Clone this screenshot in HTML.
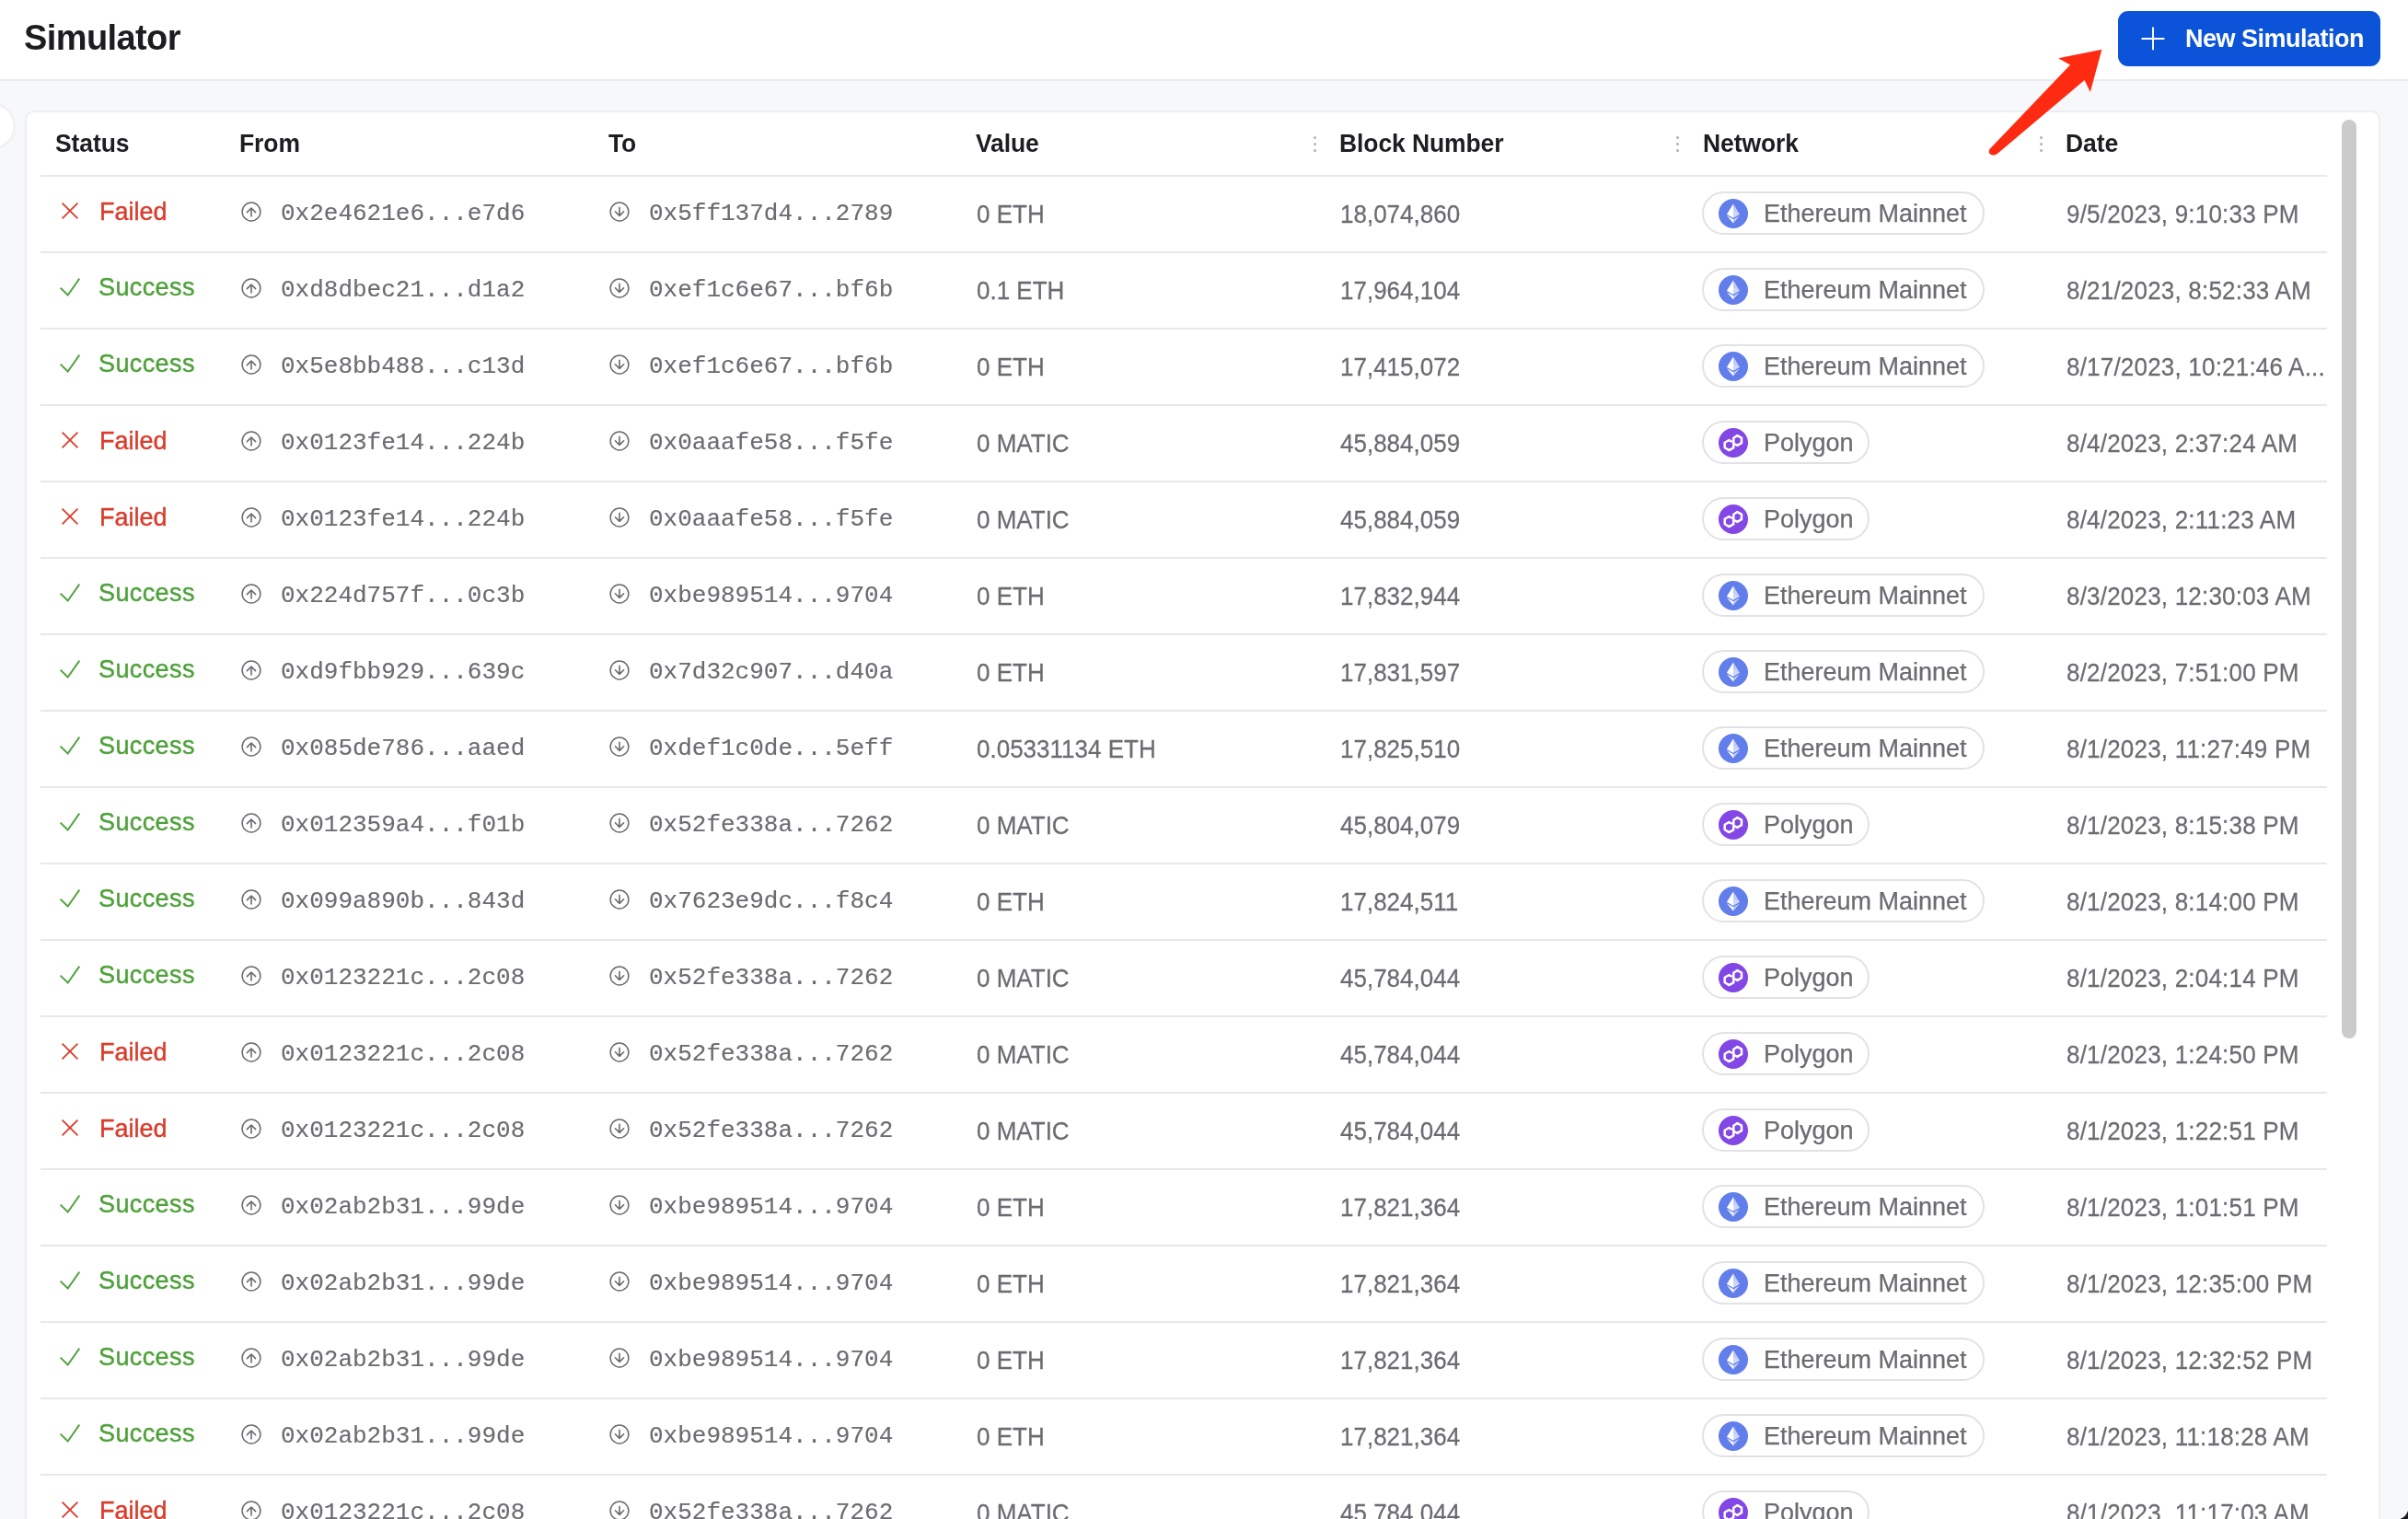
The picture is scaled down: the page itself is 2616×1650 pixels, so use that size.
<!DOCTYPE html>
<html><head><meta charset="utf-8"><title>Simulator</title><style>
*{box-sizing:border-box;margin:0;padding:0}
html,body{width:2616px;height:1650px;overflow:hidden;background:#f7f8fa;font-family:"Liberation Sans",sans-serif}
#hdr{position:absolute;left:0;top:0;width:2616px;height:88px;background:#fff;border-bottom:2px solid #ebecef}
#title{position:absolute;left:26px;top:15px;font-size:38px;line-height:52px;font-weight:700;color:#1d1d21;letter-spacing:-0.6px}
#btn{position:absolute;left:2301px;top:12px;width:285px;height:60px;background:#0b54d9;border-radius:11px;color:#fff}
#btn svg{position:absolute;left:25px;top:17px}
#btn span{position:absolute;left:73px;top:15px;font-size:27px;line-height:30px;font-weight:700;letter-spacing:-0.5px}
#knob{position:absolute;left:-32px;top:113px;width:48px;height:48px;border-radius:50%;background:#fff;border:1.5px solid #e9eaed;box-shadow:0 0 3px rgba(0,0,0,0.06)}
#card{position:absolute;left:27px;top:120px;width:2559px;height:1700px;background:#fff;border:2px solid #eceef1;border-radius:10px}
.hline{position:absolute;left:44px;width:2484px;height:2px;background:#e7e8ec}
.th{position:absolute;top:140px;font-size:26.5px;line-height:30px;font-weight:700;color:#1d1d22;letter-spacing:-0.1px;transform:scaleY(1.06);transform-origin:0 0}
.dots{position:absolute;width:4px;height:18px;top:147.7px}
.dots i{position:absolute;left:0;width:3.4px;height:3.4px;border-radius:50%;background:#b0b0b5}
.row{position:absolute;left:0;width:2616px;height:81px}
.c{position:absolute;top:0;height:81px;white-space:nowrap}
.stat span{position:absolute;left:41px;top:23px;font-size:27px;line-height:30px}
.succ span{letter-spacing:0.4px;left:42px;top:22px}
.fail{color:#d93d2c}
.stat span{-webkit-text-stroke:0.45px currentColor}
.succ{color:#4fa13b}
.stat svg{position:absolute}
.fail svg{left:-1px;top:27px}
.succ svg{left:-1px;top:26px}
.addr svg{position:absolute;left:0;top:26px}
.addr span{-webkit-text-stroke:0.15px currentColor;position:absolute;left:44px;top:25px;font-family:"Liberation Mono",monospace;font-size:26px;line-height:30px;color:#6b6b72}
.dt{letter-spacing:0.2px}
.txt{top:25px;-webkit-text-stroke:0.25px currentColor;font-size:26px;line-height:30px;color:#6b6b72;transform:scaleY(1.06);transform-origin:0 0}
.chip{position:absolute;left:0;top:16px;height:47px;border:2px solid #e2e2e6;border-radius:24px;background:#fff}
.chip.eth{width:307px}
.chip.pol{width:182px}
.chip svg{position:absolute;left:16px;top:6px}
.chip span{-webkit-text-stroke:0.25px currentColor;position:absolute;left:65px;top:7px;font-size:27px;line-height:30px;color:#6b6b72}
#sb{position:absolute;left:2544px;top:130px;width:16px;height:998px;border-radius:8px;background:#cbcbce}
#arrow{position:absolute;left:0;top:0}
</style></head>
<body>
<div id="root" style="will-change:transform;position:absolute;left:0;top:0;width:2616px;height:1650px;overflow:hidden">
<div id="hdr">
<div id="title">Simulator</div>
<div id="btn"><svg width="26" height="26" viewBox="0 0 26 26"><path d="M13 0.6V25.2M0.5 13H25.4" stroke="#fff" stroke-width="1.9"/></svg><span>New Simulation</span></div>
</div>
<div id="knob"></div>
<div id="card"></div>
<div class="th" style="left:60px">Status</div>
<div class="th" style="left:260px">From</div>
<div class="th" style="left:661px">To</div>
<div class="th" style="left:1060px">Value</div>
<div class="th" style="left:1455px">Block Number</div>
<div class="th" style="left:1850px">Network</div>
<div class="th" style="left:2244px">Date</div>
<div class="dots" style="left:1426.5px"><i style="top:0"></i><i style="top:7px"></i><i style="top:14px"></i></div>
<div class="dots" style="left:1821px"><i style="top:0"></i><i style="top:7px"></i><i style="top:14px"></i></div>
<div class="dots" style="left:2216px"><i style="top:0"></i><i style="top:7px"></i><i style="top:14px"></i></div>
<div class="hline" style="top:190px"></div>
<div class="hline" style="top:273px"></div>
<div class="hline" style="top:356px"></div>
<div class="hline" style="top:439px"></div>
<div class="hline" style="top:522px"></div>
<div class="hline" style="top:605px"></div>
<div class="hline" style="top:688px"></div>
<div class="hline" style="top:771px"></div>
<div class="hline" style="top:854px"></div>
<div class="hline" style="top:937px"></div>
<div class="hline" style="top:1020px"></div>
<div class="hline" style="top:1103px"></div>
<div class="hline" style="top:1186px"></div>
<div class="hline" style="top:1269px"></div>
<div class="hline" style="top:1352px"></div>
<div class="hline" style="top:1435px"></div>
<div class="hline" style="top:1518px"></div>
<div class="hline" style="top:1601px"></div>
<div class="row" style="top:192px">
<div class="c stat fail" style="left:67px"><svg class="ic st" width="20" height="20" viewBox="0 0 20 20"><path d="M1.6 1.6L18.4 18.4M18.4 1.6L1.6 18.4" stroke="#d93d2c" stroke-width="1.8" fill="none"/></svg><span>Failed</span></div>
<div class="c addr" style="left:261px"><svg class="ic ad" width="24" height="24" viewBox="0 0 24 24"><circle cx="12" cy="12" r="9.9" stroke="#6b6b72" stroke-width="1.5" fill="none"/><path d="M12 16.9V8M7.4 12.6L12 8L16.6 12.6" stroke="#6b6b72" stroke-width="1.6" fill="none" stroke-linecap="round" stroke-linejoin="round"/></svg><span>0x2e4621e6...e7d6</span></div>
<div class="c addr" style="left:661px"><svg class="ic ad" width="24" height="24" viewBox="0 0 24 24"><circle cx="12" cy="12" r="9.9" stroke="#6b6b72" stroke-width="1.5" fill="none"/><path d="M12 7.4V16.4M7.4 11.8L12 16.4L16.6 11.8" stroke="#6b6b72" stroke-width="1.6" fill="none" stroke-linecap="round" stroke-linejoin="round"/></svg><span>0x5ff137d4...2789</span></div>
<div class="c txt" style="left:1061px">0 ETH</div>
<div class="c txt" style="left:1456px">18,074,860</div>
<div class="c net" style="left:1849px"><div class="chip eth"><svg class="nic" width="32" height="32" viewBox="0 0 32 32"><circle cx="16" cy="16" r="16" fill="#627eea"/><path d="M16 5.5L9 16.8L16 20.8Z" fill="#fff"/><path d="M16 5.5L23 16.8L16 20.8Z" fill="#fff" fill-opacity="0.6"/><path d="M9 16.8L16 12.8L16 20.8Z" fill="#fff" fill-opacity="0.6" /><path d="M23 16.8L16 12.8L16 20.8Z" fill="#fff" fill-opacity="0.25"/><path d="M9 18.3L16 26.5L16 22.3Z" fill="#fff"/><path d="M23 18.3L16 26.5L16 22.3Z" fill="#fff" fill-opacity="0.6"/></svg><span>Ethereum Mainnet</span></div></div>
<div class="c txt dt" style="left:2245px">9/5/2023, 9:10:33 PM</div>
</div>
<div class="row" style="top:275px">
<div class="c stat succ" style="left:65px"><svg class="ic st" width="24" height="22" viewBox="0 0 24 22"><path d="M1.6 11.6L9.7 19.5L22.3 1.6" stroke="#4fa13b" stroke-width="1.9" fill="none" stroke-linejoin="miter"/></svg><span>Success</span></div>
<div class="c addr" style="left:261px"><svg class="ic ad" width="24" height="24" viewBox="0 0 24 24"><circle cx="12" cy="12" r="9.9" stroke="#6b6b72" stroke-width="1.5" fill="none"/><path d="M12 16.9V8M7.4 12.6L12 8L16.6 12.6" stroke="#6b6b72" stroke-width="1.6" fill="none" stroke-linecap="round" stroke-linejoin="round"/></svg><span>0xd8dbec21...d1a2</span></div>
<div class="c addr" style="left:661px"><svg class="ic ad" width="24" height="24" viewBox="0 0 24 24"><circle cx="12" cy="12" r="9.9" stroke="#6b6b72" stroke-width="1.5" fill="none"/><path d="M12 7.4V16.4M7.4 11.8L12 16.4L16.6 11.8" stroke="#6b6b72" stroke-width="1.6" fill="none" stroke-linecap="round" stroke-linejoin="round"/></svg><span>0xef1c6e67...bf6b</span></div>
<div class="c txt" style="left:1061px">0.1 ETH</div>
<div class="c txt" style="left:1456px">17,964,104</div>
<div class="c net" style="left:1849px"><div class="chip eth"><svg class="nic" width="32" height="32" viewBox="0 0 32 32"><circle cx="16" cy="16" r="16" fill="#627eea"/><path d="M16 5.5L9 16.8L16 20.8Z" fill="#fff"/><path d="M16 5.5L23 16.8L16 20.8Z" fill="#fff" fill-opacity="0.6"/><path d="M9 16.8L16 12.8L16 20.8Z" fill="#fff" fill-opacity="0.6" /><path d="M23 16.8L16 12.8L16 20.8Z" fill="#fff" fill-opacity="0.25"/><path d="M9 18.3L16 26.5L16 22.3Z" fill="#fff"/><path d="M23 18.3L16 26.5L16 22.3Z" fill="#fff" fill-opacity="0.6"/></svg><span>Ethereum Mainnet</span></div></div>
<div class="c txt dt" style="left:2245px">8/21/2023, 8:52:33 AM</div>
</div>
<div class="row" style="top:358px">
<div class="c stat succ" style="left:65px"><svg class="ic st" width="24" height="22" viewBox="0 0 24 22"><path d="M1.6 11.6L9.7 19.5L22.3 1.6" stroke="#4fa13b" stroke-width="1.9" fill="none" stroke-linejoin="miter"/></svg><span>Success</span></div>
<div class="c addr" style="left:261px"><svg class="ic ad" width="24" height="24" viewBox="0 0 24 24"><circle cx="12" cy="12" r="9.9" stroke="#6b6b72" stroke-width="1.5" fill="none"/><path d="M12 16.9V8M7.4 12.6L12 8L16.6 12.6" stroke="#6b6b72" stroke-width="1.6" fill="none" stroke-linecap="round" stroke-linejoin="round"/></svg><span>0x5e8bb488...c13d</span></div>
<div class="c addr" style="left:661px"><svg class="ic ad" width="24" height="24" viewBox="0 0 24 24"><circle cx="12" cy="12" r="9.9" stroke="#6b6b72" stroke-width="1.5" fill="none"/><path d="M12 7.4V16.4M7.4 11.8L12 16.4L16.6 11.8" stroke="#6b6b72" stroke-width="1.6" fill="none" stroke-linecap="round" stroke-linejoin="round"/></svg><span>0xef1c6e67...bf6b</span></div>
<div class="c txt" style="left:1061px">0 ETH</div>
<div class="c txt" style="left:1456px">17,415,072</div>
<div class="c net" style="left:1849px"><div class="chip eth"><svg class="nic" width="32" height="32" viewBox="0 0 32 32"><circle cx="16" cy="16" r="16" fill="#627eea"/><path d="M16 5.5L9 16.8L16 20.8Z" fill="#fff"/><path d="M16 5.5L23 16.8L16 20.8Z" fill="#fff" fill-opacity="0.6"/><path d="M9 16.8L16 12.8L16 20.8Z" fill="#fff" fill-opacity="0.6" /><path d="M23 16.8L16 12.8L16 20.8Z" fill="#fff" fill-opacity="0.25"/><path d="M9 18.3L16 26.5L16 22.3Z" fill="#fff"/><path d="M23 18.3L16 26.5L16 22.3Z" fill="#fff" fill-opacity="0.6"/></svg><span>Ethereum Mainnet</span></div></div>
<div class="c txt dt" style="left:2245px">8/17/2023, 10:21:46 A...</div>
</div>
<div class="row" style="top:441px">
<div class="c stat fail" style="left:67px"><svg class="ic st" width="20" height="20" viewBox="0 0 20 20"><path d="M1.6 1.6L18.4 18.4M18.4 1.6L1.6 18.4" stroke="#d93d2c" stroke-width="1.8" fill="none"/></svg><span>Failed</span></div>
<div class="c addr" style="left:261px"><svg class="ic ad" width="24" height="24" viewBox="0 0 24 24"><circle cx="12" cy="12" r="9.9" stroke="#6b6b72" stroke-width="1.5" fill="none"/><path d="M12 16.9V8M7.4 12.6L12 8L16.6 12.6" stroke="#6b6b72" stroke-width="1.6" fill="none" stroke-linecap="round" stroke-linejoin="round"/></svg><span>0x0123fe14...224b</span></div>
<div class="c addr" style="left:661px"><svg class="ic ad" width="24" height="24" viewBox="0 0 24 24"><circle cx="12" cy="12" r="9.9" stroke="#6b6b72" stroke-width="1.5" fill="none"/><path d="M12 7.4V16.4M7.4 11.8L12 16.4L16.6 11.8" stroke="#6b6b72" stroke-width="1.6" fill="none" stroke-linecap="round" stroke-linejoin="round"/></svg><span>0x0aaafe58...f5fe</span></div>
<div class="c txt" style="left:1061px">0 MATIC</div>
<div class="c txt" style="left:1456px">45,884,059</div>
<div class="c net" style="left:1849px"><div class="chip pol"><svg class="nic" width="32" height="32" viewBox="0 0 32 32"><circle cx="16" cy="16" r="16" fill="#8247e5"/><path d="M16.3 21.3V10.7L20.4 8.1L25 10.7V16.2L20.4 18.9L18 17.5M16.3 21.3L11.4 24.1L6.7 21.3V15.8L11.4 13L14 14.5" stroke="#fff" stroke-width="2.5" fill="none" stroke-linejoin="round" stroke-linecap="round"/></svg><span>Polygon</span></div></div>
<div class="c txt dt" style="left:2245px">8/4/2023, 2:37:24 AM</div>
</div>
<div class="row" style="top:524px">
<div class="c stat fail" style="left:67px"><svg class="ic st" width="20" height="20" viewBox="0 0 20 20"><path d="M1.6 1.6L18.4 18.4M18.4 1.6L1.6 18.4" stroke="#d93d2c" stroke-width="1.8" fill="none"/></svg><span>Failed</span></div>
<div class="c addr" style="left:261px"><svg class="ic ad" width="24" height="24" viewBox="0 0 24 24"><circle cx="12" cy="12" r="9.9" stroke="#6b6b72" stroke-width="1.5" fill="none"/><path d="M12 16.9V8M7.4 12.6L12 8L16.6 12.6" stroke="#6b6b72" stroke-width="1.6" fill="none" stroke-linecap="round" stroke-linejoin="round"/></svg><span>0x0123fe14...224b</span></div>
<div class="c addr" style="left:661px"><svg class="ic ad" width="24" height="24" viewBox="0 0 24 24"><circle cx="12" cy="12" r="9.9" stroke="#6b6b72" stroke-width="1.5" fill="none"/><path d="M12 7.4V16.4M7.4 11.8L12 16.4L16.6 11.8" stroke="#6b6b72" stroke-width="1.6" fill="none" stroke-linecap="round" stroke-linejoin="round"/></svg><span>0x0aaafe58...f5fe</span></div>
<div class="c txt" style="left:1061px">0 MATIC</div>
<div class="c txt" style="left:1456px">45,884,059</div>
<div class="c net" style="left:1849px"><div class="chip pol"><svg class="nic" width="32" height="32" viewBox="0 0 32 32"><circle cx="16" cy="16" r="16" fill="#8247e5"/><path d="M16.3 21.3V10.7L20.4 8.1L25 10.7V16.2L20.4 18.9L18 17.5M16.3 21.3L11.4 24.1L6.7 21.3V15.8L11.4 13L14 14.5" stroke="#fff" stroke-width="2.5" fill="none" stroke-linejoin="round" stroke-linecap="round"/></svg><span>Polygon</span></div></div>
<div class="c txt dt" style="left:2245px">8/4/2023, 2:11:23 AM</div>
</div>
<div class="row" style="top:607px">
<div class="c stat succ" style="left:65px"><svg class="ic st" width="24" height="22" viewBox="0 0 24 22"><path d="M1.6 11.6L9.7 19.5L22.3 1.6" stroke="#4fa13b" stroke-width="1.9" fill="none" stroke-linejoin="miter"/></svg><span>Success</span></div>
<div class="c addr" style="left:261px"><svg class="ic ad" width="24" height="24" viewBox="0 0 24 24"><circle cx="12" cy="12" r="9.9" stroke="#6b6b72" stroke-width="1.5" fill="none"/><path d="M12 16.9V8M7.4 12.6L12 8L16.6 12.6" stroke="#6b6b72" stroke-width="1.6" fill="none" stroke-linecap="round" stroke-linejoin="round"/></svg><span>0x224d757f...0c3b</span></div>
<div class="c addr" style="left:661px"><svg class="ic ad" width="24" height="24" viewBox="0 0 24 24"><circle cx="12" cy="12" r="9.9" stroke="#6b6b72" stroke-width="1.5" fill="none"/><path d="M12 7.4V16.4M7.4 11.8L12 16.4L16.6 11.8" stroke="#6b6b72" stroke-width="1.6" fill="none" stroke-linecap="round" stroke-linejoin="round"/></svg><span>0xbe989514...9704</span></div>
<div class="c txt" style="left:1061px">0 ETH</div>
<div class="c txt" style="left:1456px">17,832,944</div>
<div class="c net" style="left:1849px"><div class="chip eth"><svg class="nic" width="32" height="32" viewBox="0 0 32 32"><circle cx="16" cy="16" r="16" fill="#627eea"/><path d="M16 5.5L9 16.8L16 20.8Z" fill="#fff"/><path d="M16 5.5L23 16.8L16 20.8Z" fill="#fff" fill-opacity="0.6"/><path d="M9 16.8L16 12.8L16 20.8Z" fill="#fff" fill-opacity="0.6" /><path d="M23 16.8L16 12.8L16 20.8Z" fill="#fff" fill-opacity="0.25"/><path d="M9 18.3L16 26.5L16 22.3Z" fill="#fff"/><path d="M23 18.3L16 26.5L16 22.3Z" fill="#fff" fill-opacity="0.6"/></svg><span>Ethereum Mainnet</span></div></div>
<div class="c txt dt" style="left:2245px">8/3/2023, 12:30:03 AM</div>
</div>
<div class="row" style="top:690px">
<div class="c stat succ" style="left:65px"><svg class="ic st" width="24" height="22" viewBox="0 0 24 22"><path d="M1.6 11.6L9.7 19.5L22.3 1.6" stroke="#4fa13b" stroke-width="1.9" fill="none" stroke-linejoin="miter"/></svg><span>Success</span></div>
<div class="c addr" style="left:261px"><svg class="ic ad" width="24" height="24" viewBox="0 0 24 24"><circle cx="12" cy="12" r="9.9" stroke="#6b6b72" stroke-width="1.5" fill="none"/><path d="M12 16.9V8M7.4 12.6L12 8L16.6 12.6" stroke="#6b6b72" stroke-width="1.6" fill="none" stroke-linecap="round" stroke-linejoin="round"/></svg><span>0xd9fbb929...639c</span></div>
<div class="c addr" style="left:661px"><svg class="ic ad" width="24" height="24" viewBox="0 0 24 24"><circle cx="12" cy="12" r="9.9" stroke="#6b6b72" stroke-width="1.5" fill="none"/><path d="M12 7.4V16.4M7.4 11.8L12 16.4L16.6 11.8" stroke="#6b6b72" stroke-width="1.6" fill="none" stroke-linecap="round" stroke-linejoin="round"/></svg><span>0x7d32c907...d40a</span></div>
<div class="c txt" style="left:1061px">0 ETH</div>
<div class="c txt" style="left:1456px">17,831,597</div>
<div class="c net" style="left:1849px"><div class="chip eth"><svg class="nic" width="32" height="32" viewBox="0 0 32 32"><circle cx="16" cy="16" r="16" fill="#627eea"/><path d="M16 5.5L9 16.8L16 20.8Z" fill="#fff"/><path d="M16 5.5L23 16.8L16 20.8Z" fill="#fff" fill-opacity="0.6"/><path d="M9 16.8L16 12.8L16 20.8Z" fill="#fff" fill-opacity="0.6" /><path d="M23 16.8L16 12.8L16 20.8Z" fill="#fff" fill-opacity="0.25"/><path d="M9 18.3L16 26.5L16 22.3Z" fill="#fff"/><path d="M23 18.3L16 26.5L16 22.3Z" fill="#fff" fill-opacity="0.6"/></svg><span>Ethereum Mainnet</span></div></div>
<div class="c txt dt" style="left:2245px">8/2/2023, 7:51:00 PM</div>
</div>
<div class="row" style="top:773px">
<div class="c stat succ" style="left:65px"><svg class="ic st" width="24" height="22" viewBox="0 0 24 22"><path d="M1.6 11.6L9.7 19.5L22.3 1.6" stroke="#4fa13b" stroke-width="1.9" fill="none" stroke-linejoin="miter"/></svg><span>Success</span></div>
<div class="c addr" style="left:261px"><svg class="ic ad" width="24" height="24" viewBox="0 0 24 24"><circle cx="12" cy="12" r="9.9" stroke="#6b6b72" stroke-width="1.5" fill="none"/><path d="M12 16.9V8M7.4 12.6L12 8L16.6 12.6" stroke="#6b6b72" stroke-width="1.6" fill="none" stroke-linecap="round" stroke-linejoin="round"/></svg><span>0x085de786...aaed</span></div>
<div class="c addr" style="left:661px"><svg class="ic ad" width="24" height="24" viewBox="0 0 24 24"><circle cx="12" cy="12" r="9.9" stroke="#6b6b72" stroke-width="1.5" fill="none"/><path d="M12 7.4V16.4M7.4 11.8L12 16.4L16.6 11.8" stroke="#6b6b72" stroke-width="1.6" fill="none" stroke-linecap="round" stroke-linejoin="round"/></svg><span>0xdef1c0de...5eff</span></div>
<div class="c txt" style="left:1061px">0.05331134 ETH</div>
<div class="c txt" style="left:1456px">17,825,510</div>
<div class="c net" style="left:1849px"><div class="chip eth"><svg class="nic" width="32" height="32" viewBox="0 0 32 32"><circle cx="16" cy="16" r="16" fill="#627eea"/><path d="M16 5.5L9 16.8L16 20.8Z" fill="#fff"/><path d="M16 5.5L23 16.8L16 20.8Z" fill="#fff" fill-opacity="0.6"/><path d="M9 16.8L16 12.8L16 20.8Z" fill="#fff" fill-opacity="0.6" /><path d="M23 16.8L16 12.8L16 20.8Z" fill="#fff" fill-opacity="0.25"/><path d="M9 18.3L16 26.5L16 22.3Z" fill="#fff"/><path d="M23 18.3L16 26.5L16 22.3Z" fill="#fff" fill-opacity="0.6"/></svg><span>Ethereum Mainnet</span></div></div>
<div class="c txt dt" style="left:2245px">8/1/2023, 11:27:49 PM</div>
</div>
<div class="row" style="top:856px">
<div class="c stat succ" style="left:65px"><svg class="ic st" width="24" height="22" viewBox="0 0 24 22"><path d="M1.6 11.6L9.7 19.5L22.3 1.6" stroke="#4fa13b" stroke-width="1.9" fill="none" stroke-linejoin="miter"/></svg><span>Success</span></div>
<div class="c addr" style="left:261px"><svg class="ic ad" width="24" height="24" viewBox="0 0 24 24"><circle cx="12" cy="12" r="9.9" stroke="#6b6b72" stroke-width="1.5" fill="none"/><path d="M12 16.9V8M7.4 12.6L12 8L16.6 12.6" stroke="#6b6b72" stroke-width="1.6" fill="none" stroke-linecap="round" stroke-linejoin="round"/></svg><span>0x012359a4...f01b</span></div>
<div class="c addr" style="left:661px"><svg class="ic ad" width="24" height="24" viewBox="0 0 24 24"><circle cx="12" cy="12" r="9.9" stroke="#6b6b72" stroke-width="1.5" fill="none"/><path d="M12 7.4V16.4M7.4 11.8L12 16.4L16.6 11.8" stroke="#6b6b72" stroke-width="1.6" fill="none" stroke-linecap="round" stroke-linejoin="round"/></svg><span>0x52fe338a...7262</span></div>
<div class="c txt" style="left:1061px">0 MATIC</div>
<div class="c txt" style="left:1456px">45,804,079</div>
<div class="c net" style="left:1849px"><div class="chip pol"><svg class="nic" width="32" height="32" viewBox="0 0 32 32"><circle cx="16" cy="16" r="16" fill="#8247e5"/><path d="M16.3 21.3V10.7L20.4 8.1L25 10.7V16.2L20.4 18.9L18 17.5M16.3 21.3L11.4 24.1L6.7 21.3V15.8L11.4 13L14 14.5" stroke="#fff" stroke-width="2.5" fill="none" stroke-linejoin="round" stroke-linecap="round"/></svg><span>Polygon</span></div></div>
<div class="c txt dt" style="left:2245px">8/1/2023, 8:15:38 PM</div>
</div>
<div class="row" style="top:939px">
<div class="c stat succ" style="left:65px"><svg class="ic st" width="24" height="22" viewBox="0 0 24 22"><path d="M1.6 11.6L9.7 19.5L22.3 1.6" stroke="#4fa13b" stroke-width="1.9" fill="none" stroke-linejoin="miter"/></svg><span>Success</span></div>
<div class="c addr" style="left:261px"><svg class="ic ad" width="24" height="24" viewBox="0 0 24 24"><circle cx="12" cy="12" r="9.9" stroke="#6b6b72" stroke-width="1.5" fill="none"/><path d="M12 16.9V8M7.4 12.6L12 8L16.6 12.6" stroke="#6b6b72" stroke-width="1.6" fill="none" stroke-linecap="round" stroke-linejoin="round"/></svg><span>0x099a890b...843d</span></div>
<div class="c addr" style="left:661px"><svg class="ic ad" width="24" height="24" viewBox="0 0 24 24"><circle cx="12" cy="12" r="9.9" stroke="#6b6b72" stroke-width="1.5" fill="none"/><path d="M12 7.4V16.4M7.4 11.8L12 16.4L16.6 11.8" stroke="#6b6b72" stroke-width="1.6" fill="none" stroke-linecap="round" stroke-linejoin="round"/></svg><span>0x7623e9dc...f8c4</span></div>
<div class="c txt" style="left:1061px">0 ETH</div>
<div class="c txt" style="left:1456px">17,824,511</div>
<div class="c net" style="left:1849px"><div class="chip eth"><svg class="nic" width="32" height="32" viewBox="0 0 32 32"><circle cx="16" cy="16" r="16" fill="#627eea"/><path d="M16 5.5L9 16.8L16 20.8Z" fill="#fff"/><path d="M16 5.5L23 16.8L16 20.8Z" fill="#fff" fill-opacity="0.6"/><path d="M9 16.8L16 12.8L16 20.8Z" fill="#fff" fill-opacity="0.6" /><path d="M23 16.8L16 12.8L16 20.8Z" fill="#fff" fill-opacity="0.25"/><path d="M9 18.3L16 26.5L16 22.3Z" fill="#fff"/><path d="M23 18.3L16 26.5L16 22.3Z" fill="#fff" fill-opacity="0.6"/></svg><span>Ethereum Mainnet</span></div></div>
<div class="c txt dt" style="left:2245px">8/1/2023, 8:14:00 PM</div>
</div>
<div class="row" style="top:1022px">
<div class="c stat succ" style="left:65px"><svg class="ic st" width="24" height="22" viewBox="0 0 24 22"><path d="M1.6 11.6L9.7 19.5L22.3 1.6" stroke="#4fa13b" stroke-width="1.9" fill="none" stroke-linejoin="miter"/></svg><span>Success</span></div>
<div class="c addr" style="left:261px"><svg class="ic ad" width="24" height="24" viewBox="0 0 24 24"><circle cx="12" cy="12" r="9.9" stroke="#6b6b72" stroke-width="1.5" fill="none"/><path d="M12 16.9V8M7.4 12.6L12 8L16.6 12.6" stroke="#6b6b72" stroke-width="1.6" fill="none" stroke-linecap="round" stroke-linejoin="round"/></svg><span>0x0123221c...2c08</span></div>
<div class="c addr" style="left:661px"><svg class="ic ad" width="24" height="24" viewBox="0 0 24 24"><circle cx="12" cy="12" r="9.9" stroke="#6b6b72" stroke-width="1.5" fill="none"/><path d="M12 7.4V16.4M7.4 11.8L12 16.4L16.6 11.8" stroke="#6b6b72" stroke-width="1.6" fill="none" stroke-linecap="round" stroke-linejoin="round"/></svg><span>0x52fe338a...7262</span></div>
<div class="c txt" style="left:1061px">0 MATIC</div>
<div class="c txt" style="left:1456px">45,784,044</div>
<div class="c net" style="left:1849px"><div class="chip pol"><svg class="nic" width="32" height="32" viewBox="0 0 32 32"><circle cx="16" cy="16" r="16" fill="#8247e5"/><path d="M16.3 21.3V10.7L20.4 8.1L25 10.7V16.2L20.4 18.9L18 17.5M16.3 21.3L11.4 24.1L6.7 21.3V15.8L11.4 13L14 14.5" stroke="#fff" stroke-width="2.5" fill="none" stroke-linejoin="round" stroke-linecap="round"/></svg><span>Polygon</span></div></div>
<div class="c txt dt" style="left:2245px">8/1/2023, 2:04:14 PM</div>
</div>
<div class="row" style="top:1105px">
<div class="c stat fail" style="left:67px"><svg class="ic st" width="20" height="20" viewBox="0 0 20 20"><path d="M1.6 1.6L18.4 18.4M18.4 1.6L1.6 18.4" stroke="#d93d2c" stroke-width="1.8" fill="none"/></svg><span>Failed</span></div>
<div class="c addr" style="left:261px"><svg class="ic ad" width="24" height="24" viewBox="0 0 24 24"><circle cx="12" cy="12" r="9.9" stroke="#6b6b72" stroke-width="1.5" fill="none"/><path d="M12 16.9V8M7.4 12.6L12 8L16.6 12.6" stroke="#6b6b72" stroke-width="1.6" fill="none" stroke-linecap="round" stroke-linejoin="round"/></svg><span>0x0123221c...2c08</span></div>
<div class="c addr" style="left:661px"><svg class="ic ad" width="24" height="24" viewBox="0 0 24 24"><circle cx="12" cy="12" r="9.9" stroke="#6b6b72" stroke-width="1.5" fill="none"/><path d="M12 7.4V16.4M7.4 11.8L12 16.4L16.6 11.8" stroke="#6b6b72" stroke-width="1.6" fill="none" stroke-linecap="round" stroke-linejoin="round"/></svg><span>0x52fe338a...7262</span></div>
<div class="c txt" style="left:1061px">0 MATIC</div>
<div class="c txt" style="left:1456px">45,784,044</div>
<div class="c net" style="left:1849px"><div class="chip pol"><svg class="nic" width="32" height="32" viewBox="0 0 32 32"><circle cx="16" cy="16" r="16" fill="#8247e5"/><path d="M16.3 21.3V10.7L20.4 8.1L25 10.7V16.2L20.4 18.9L18 17.5M16.3 21.3L11.4 24.1L6.7 21.3V15.8L11.4 13L14 14.5" stroke="#fff" stroke-width="2.5" fill="none" stroke-linejoin="round" stroke-linecap="round"/></svg><span>Polygon</span></div></div>
<div class="c txt dt" style="left:2245px">8/1/2023, 1:24:50 PM</div>
</div>
<div class="row" style="top:1188px">
<div class="c stat fail" style="left:67px"><svg class="ic st" width="20" height="20" viewBox="0 0 20 20"><path d="M1.6 1.6L18.4 18.4M18.4 1.6L1.6 18.4" stroke="#d93d2c" stroke-width="1.8" fill="none"/></svg><span>Failed</span></div>
<div class="c addr" style="left:261px"><svg class="ic ad" width="24" height="24" viewBox="0 0 24 24"><circle cx="12" cy="12" r="9.9" stroke="#6b6b72" stroke-width="1.5" fill="none"/><path d="M12 16.9V8M7.4 12.6L12 8L16.6 12.6" stroke="#6b6b72" stroke-width="1.6" fill="none" stroke-linecap="round" stroke-linejoin="round"/></svg><span>0x0123221c...2c08</span></div>
<div class="c addr" style="left:661px"><svg class="ic ad" width="24" height="24" viewBox="0 0 24 24"><circle cx="12" cy="12" r="9.9" stroke="#6b6b72" stroke-width="1.5" fill="none"/><path d="M12 7.4V16.4M7.4 11.8L12 16.4L16.6 11.8" stroke="#6b6b72" stroke-width="1.6" fill="none" stroke-linecap="round" stroke-linejoin="round"/></svg><span>0x52fe338a...7262</span></div>
<div class="c txt" style="left:1061px">0 MATIC</div>
<div class="c txt" style="left:1456px">45,784,044</div>
<div class="c net" style="left:1849px"><div class="chip pol"><svg class="nic" width="32" height="32" viewBox="0 0 32 32"><circle cx="16" cy="16" r="16" fill="#8247e5"/><path d="M16.3 21.3V10.7L20.4 8.1L25 10.7V16.2L20.4 18.9L18 17.5M16.3 21.3L11.4 24.1L6.7 21.3V15.8L11.4 13L14 14.5" stroke="#fff" stroke-width="2.5" fill="none" stroke-linejoin="round" stroke-linecap="round"/></svg><span>Polygon</span></div></div>
<div class="c txt dt" style="left:2245px">8/1/2023, 1:22:51 PM</div>
</div>
<div class="row" style="top:1271px">
<div class="c stat succ" style="left:65px"><svg class="ic st" width="24" height="22" viewBox="0 0 24 22"><path d="M1.6 11.6L9.7 19.5L22.3 1.6" stroke="#4fa13b" stroke-width="1.9" fill="none" stroke-linejoin="miter"/></svg><span>Success</span></div>
<div class="c addr" style="left:261px"><svg class="ic ad" width="24" height="24" viewBox="0 0 24 24"><circle cx="12" cy="12" r="9.9" stroke="#6b6b72" stroke-width="1.5" fill="none"/><path d="M12 16.9V8M7.4 12.6L12 8L16.6 12.6" stroke="#6b6b72" stroke-width="1.6" fill="none" stroke-linecap="round" stroke-linejoin="round"/></svg><span>0x02ab2b31...99de</span></div>
<div class="c addr" style="left:661px"><svg class="ic ad" width="24" height="24" viewBox="0 0 24 24"><circle cx="12" cy="12" r="9.9" stroke="#6b6b72" stroke-width="1.5" fill="none"/><path d="M12 7.4V16.4M7.4 11.8L12 16.4L16.6 11.8" stroke="#6b6b72" stroke-width="1.6" fill="none" stroke-linecap="round" stroke-linejoin="round"/></svg><span>0xbe989514...9704</span></div>
<div class="c txt" style="left:1061px">0 ETH</div>
<div class="c txt" style="left:1456px">17,821,364</div>
<div class="c net" style="left:1849px"><div class="chip eth"><svg class="nic" width="32" height="32" viewBox="0 0 32 32"><circle cx="16" cy="16" r="16" fill="#627eea"/><path d="M16 5.5L9 16.8L16 20.8Z" fill="#fff"/><path d="M16 5.5L23 16.8L16 20.8Z" fill="#fff" fill-opacity="0.6"/><path d="M9 16.8L16 12.8L16 20.8Z" fill="#fff" fill-opacity="0.6" /><path d="M23 16.8L16 12.8L16 20.8Z" fill="#fff" fill-opacity="0.25"/><path d="M9 18.3L16 26.5L16 22.3Z" fill="#fff"/><path d="M23 18.3L16 26.5L16 22.3Z" fill="#fff" fill-opacity="0.6"/></svg><span>Ethereum Mainnet</span></div></div>
<div class="c txt dt" style="left:2245px">8/1/2023, 1:01:51 PM</div>
</div>
<div class="row" style="top:1354px">
<div class="c stat succ" style="left:65px"><svg class="ic st" width="24" height="22" viewBox="0 0 24 22"><path d="M1.6 11.6L9.7 19.5L22.3 1.6" stroke="#4fa13b" stroke-width="1.9" fill="none" stroke-linejoin="miter"/></svg><span>Success</span></div>
<div class="c addr" style="left:261px"><svg class="ic ad" width="24" height="24" viewBox="0 0 24 24"><circle cx="12" cy="12" r="9.9" stroke="#6b6b72" stroke-width="1.5" fill="none"/><path d="M12 16.9V8M7.4 12.6L12 8L16.6 12.6" stroke="#6b6b72" stroke-width="1.6" fill="none" stroke-linecap="round" stroke-linejoin="round"/></svg><span>0x02ab2b31...99de</span></div>
<div class="c addr" style="left:661px"><svg class="ic ad" width="24" height="24" viewBox="0 0 24 24"><circle cx="12" cy="12" r="9.9" stroke="#6b6b72" stroke-width="1.5" fill="none"/><path d="M12 7.4V16.4M7.4 11.8L12 16.4L16.6 11.8" stroke="#6b6b72" stroke-width="1.6" fill="none" stroke-linecap="round" stroke-linejoin="round"/></svg><span>0xbe989514...9704</span></div>
<div class="c txt" style="left:1061px">0 ETH</div>
<div class="c txt" style="left:1456px">17,821,364</div>
<div class="c net" style="left:1849px"><div class="chip eth"><svg class="nic" width="32" height="32" viewBox="0 0 32 32"><circle cx="16" cy="16" r="16" fill="#627eea"/><path d="M16 5.5L9 16.8L16 20.8Z" fill="#fff"/><path d="M16 5.5L23 16.8L16 20.8Z" fill="#fff" fill-opacity="0.6"/><path d="M9 16.8L16 12.8L16 20.8Z" fill="#fff" fill-opacity="0.6" /><path d="M23 16.8L16 12.8L16 20.8Z" fill="#fff" fill-opacity="0.25"/><path d="M9 18.3L16 26.5L16 22.3Z" fill="#fff"/><path d="M23 18.3L16 26.5L16 22.3Z" fill="#fff" fill-opacity="0.6"/></svg><span>Ethereum Mainnet</span></div></div>
<div class="c txt dt" style="left:2245px">8/1/2023, 12:35:00 PM</div>
</div>
<div class="row" style="top:1437px">
<div class="c stat succ" style="left:65px"><svg class="ic st" width="24" height="22" viewBox="0 0 24 22"><path d="M1.6 11.6L9.7 19.5L22.3 1.6" stroke="#4fa13b" stroke-width="1.9" fill="none" stroke-linejoin="miter"/></svg><span>Success</span></div>
<div class="c addr" style="left:261px"><svg class="ic ad" width="24" height="24" viewBox="0 0 24 24"><circle cx="12" cy="12" r="9.9" stroke="#6b6b72" stroke-width="1.5" fill="none"/><path d="M12 16.9V8M7.4 12.6L12 8L16.6 12.6" stroke="#6b6b72" stroke-width="1.6" fill="none" stroke-linecap="round" stroke-linejoin="round"/></svg><span>0x02ab2b31...99de</span></div>
<div class="c addr" style="left:661px"><svg class="ic ad" width="24" height="24" viewBox="0 0 24 24"><circle cx="12" cy="12" r="9.9" stroke="#6b6b72" stroke-width="1.5" fill="none"/><path d="M12 7.4V16.4M7.4 11.8L12 16.4L16.6 11.8" stroke="#6b6b72" stroke-width="1.6" fill="none" stroke-linecap="round" stroke-linejoin="round"/></svg><span>0xbe989514...9704</span></div>
<div class="c txt" style="left:1061px">0 ETH</div>
<div class="c txt" style="left:1456px">17,821,364</div>
<div class="c net" style="left:1849px"><div class="chip eth"><svg class="nic" width="32" height="32" viewBox="0 0 32 32"><circle cx="16" cy="16" r="16" fill="#627eea"/><path d="M16 5.5L9 16.8L16 20.8Z" fill="#fff"/><path d="M16 5.5L23 16.8L16 20.8Z" fill="#fff" fill-opacity="0.6"/><path d="M9 16.8L16 12.8L16 20.8Z" fill="#fff" fill-opacity="0.6" /><path d="M23 16.8L16 12.8L16 20.8Z" fill="#fff" fill-opacity="0.25"/><path d="M9 18.3L16 26.5L16 22.3Z" fill="#fff"/><path d="M23 18.3L16 26.5L16 22.3Z" fill="#fff" fill-opacity="0.6"/></svg><span>Ethereum Mainnet</span></div></div>
<div class="c txt dt" style="left:2245px">8/1/2023, 12:32:52 PM</div>
</div>
<div class="row" style="top:1520px">
<div class="c stat succ" style="left:65px"><svg class="ic st" width="24" height="22" viewBox="0 0 24 22"><path d="M1.6 11.6L9.7 19.5L22.3 1.6" stroke="#4fa13b" stroke-width="1.9" fill="none" stroke-linejoin="miter"/></svg><span>Success</span></div>
<div class="c addr" style="left:261px"><svg class="ic ad" width="24" height="24" viewBox="0 0 24 24"><circle cx="12" cy="12" r="9.9" stroke="#6b6b72" stroke-width="1.5" fill="none"/><path d="M12 16.9V8M7.4 12.6L12 8L16.6 12.6" stroke="#6b6b72" stroke-width="1.6" fill="none" stroke-linecap="round" stroke-linejoin="round"/></svg><span>0x02ab2b31...99de</span></div>
<div class="c addr" style="left:661px"><svg class="ic ad" width="24" height="24" viewBox="0 0 24 24"><circle cx="12" cy="12" r="9.9" stroke="#6b6b72" stroke-width="1.5" fill="none"/><path d="M12 7.4V16.4M7.4 11.8L12 16.4L16.6 11.8" stroke="#6b6b72" stroke-width="1.6" fill="none" stroke-linecap="round" stroke-linejoin="round"/></svg><span>0xbe989514...9704</span></div>
<div class="c txt" style="left:1061px">0 ETH</div>
<div class="c txt" style="left:1456px">17,821,364</div>
<div class="c net" style="left:1849px"><div class="chip eth"><svg class="nic" width="32" height="32" viewBox="0 0 32 32"><circle cx="16" cy="16" r="16" fill="#627eea"/><path d="M16 5.5L9 16.8L16 20.8Z" fill="#fff"/><path d="M16 5.5L23 16.8L16 20.8Z" fill="#fff" fill-opacity="0.6"/><path d="M9 16.8L16 12.8L16 20.8Z" fill="#fff" fill-opacity="0.6" /><path d="M23 16.8L16 12.8L16 20.8Z" fill="#fff" fill-opacity="0.25"/><path d="M9 18.3L16 26.5L16 22.3Z" fill="#fff"/><path d="M23 18.3L16 26.5L16 22.3Z" fill="#fff" fill-opacity="0.6"/></svg><span>Ethereum Mainnet</span></div></div>
<div class="c txt dt" style="left:2245px">8/1/2023, 11:18:28 AM</div>
</div>
<div class="row" style="top:1603px">
<div class="c stat fail" style="left:67px"><svg class="ic st" width="20" height="20" viewBox="0 0 20 20"><path d="M1.6 1.6L18.4 18.4M18.4 1.6L1.6 18.4" stroke="#d93d2c" stroke-width="1.8" fill="none"/></svg><span>Failed</span></div>
<div class="c addr" style="left:261px"><svg class="ic ad" width="24" height="24" viewBox="0 0 24 24"><circle cx="12" cy="12" r="9.9" stroke="#6b6b72" stroke-width="1.5" fill="none"/><path d="M12 16.9V8M7.4 12.6L12 8L16.6 12.6" stroke="#6b6b72" stroke-width="1.6" fill="none" stroke-linecap="round" stroke-linejoin="round"/></svg><span>0x0123221c...2c08</span></div>
<div class="c addr" style="left:661px"><svg class="ic ad" width="24" height="24" viewBox="0 0 24 24"><circle cx="12" cy="12" r="9.9" stroke="#6b6b72" stroke-width="1.5" fill="none"/><path d="M12 7.4V16.4M7.4 11.8L12 16.4L16.6 11.8" stroke="#6b6b72" stroke-width="1.6" fill="none" stroke-linecap="round" stroke-linejoin="round"/></svg><span>0x52fe338a...7262</span></div>
<div class="c txt" style="left:1061px">0 MATIC</div>
<div class="c txt" style="left:1456px">45,784,044</div>
<div class="c net" style="left:1849px"><div class="chip pol"><svg class="nic" width="32" height="32" viewBox="0 0 32 32"><circle cx="16" cy="16" r="16" fill="#8247e5"/><path d="M16.3 21.3V10.7L20.4 8.1L25 10.7V16.2L20.4 18.9L18 17.5M16.3 21.3L11.4 24.1L6.7 21.3V15.8L11.4 13L14 14.5" stroke="#fff" stroke-width="2.5" fill="none" stroke-linejoin="round" stroke-linecap="round"/></svg><span>Polygon</span></div></div>
<div class="c txt dt" style="left:2245px">8/1/2023, 11:17:03 AM</div>
</div>
<div id="sb"></div>
<svg id="arrow" width="2616" height="200" viewBox="0 0 2616 200"><path d="M2283.4 53.8L2236.1 63.2L2249 70.5L2161.5 162Q2159.3 166 2163 168Q2166.5 169.6 2170.2 166.7L2264.6 86.9L2270.8 100Z" fill="#fe2b12"/></svg>
<svg style="position:absolute;left:2596px;top:1630px" width="20" height="20" viewBox="2596 1630 20 20"><path d="M2606.3 1650Q2613 1647 2616 1640" stroke="#fff" stroke-width="2" fill="none"/><path d="M2607.3 1650Q2613.8 1647.6 2616 1641L2616 1650Z" fill="#1c1c1f"/></svg>
</div>
</body></html>
